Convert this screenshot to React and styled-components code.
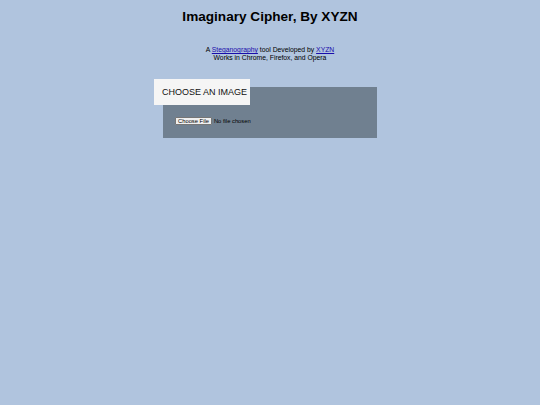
import React from 'react';
import styled, { createGlobalStyle } from 'styled-components';

const GlobalStyle = createGlobalStyle`
  html, body {
    margin: 0;
    padding: 0;
    background: #b0c4de;
    font-family: "Liberation Sans", Arial, sans-serif;
    color: #000;
  }
`;

const Page = styled.div`
  display: flex;
  flex-direction: column;
  align-items: center;
  padding-top: 9px;
`;

const Title = styled.h1`
  margin: 0;
  font-size: 13.6px;
  font-weight: bold;
  line-height: 15px;
`;

const Info = styled.p`
  margin: 22px 0 0;
  font-size: 6.8px;
  line-height: 8px;
  text-align: center;

  a {
    color: #1a0dab;
  }
`;

const Panel = styled.section`
  position: relative;
  margin-top: 25px;
  width: 214px;
  height: 51px;
  background: #708090;
  box-sizing: border-box;
  padding: 30px 0 0 12px;
`;

const PanelHeader = styled.div`
  position: absolute;
  left: -9px;
  top: -8px;
  width: 96px;
  height: 26px;
  background: #f5f5f5;
  display: flex;
  align-items: center;
  padding-left: 8px;
  box-sizing: border-box;
  font-size: 9px;
  color: #111;
`;

const FileInput = styled.input`
  display: block;
  font-size: 5.8px;
  line-height: 8px;
  height: 8px;
  font-family: "Liberation Sans", Arial, sans-serif;
  color: #000;

  &::file-selector-button {
    font-size: 5.8px;
    font-family: "Liberation Sans", Arial, sans-serif;
    height: 8px;
    padding: 0 2px;
    margin-right: 2px;
    border: 1px solid #767676;
    border-radius: 1px;
    background: #efefef;
  }
`;

export default function App() {
  return (
    <>
      <GlobalStyle />
      <Page>
        <Title>Imaginary Cipher, By XYZN</Title>
        <Info>
          A <a href="#">Steganography</a> tool Developed by <a href="#">XYZN</a>
          <br />
          Works in Chrome, Firefox, and Opera
        </Info>
        <Panel>
          <PanelHeader>CHOOSE AN IMAGE</PanelHeader>
          <FileInput type="file" accept="image/*" />
        </Panel>
      </Page>
    </>
  );
}
